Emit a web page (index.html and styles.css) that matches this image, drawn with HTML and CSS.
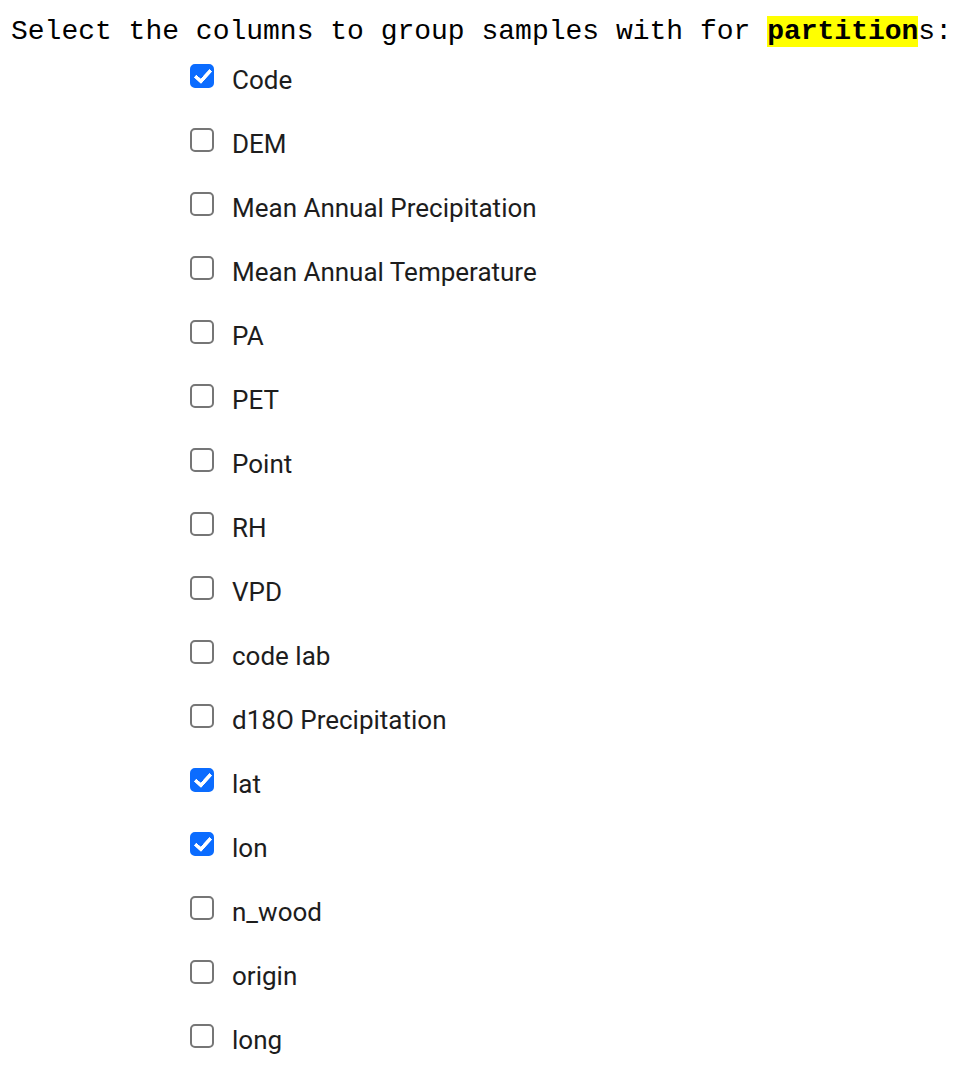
FILE: index.html
```html
<!DOCTYPE html>
<html>
<head>
<meta charset="utf-8">
<link rel="stylesheet" href="styles.css">
</head>
<body>
<p class="prompt">Select the columns to group samples with for <mark class="hl">partition</mark>s:</p>
<ul class="cols">
  <li class="row"><label class="opt"><input type="checkbox" class="cb" checked><span>Code</span></label></li>
  <li class="row"><label class="opt"><input type="checkbox" class="cb"><span>DEM</span></label></li>
  <li class="row"><label class="opt"><input type="checkbox" class="cb"><span>Mean Annual Precipitation</span></label></li>
  <li class="row"><label class="opt"><input type="checkbox" class="cb"><span>Mean Annual Temperature</span></label></li>
  <li class="row"><label class="opt"><input type="checkbox" class="cb"><span>PA</span></label></li>
  <li class="row"><label class="opt"><input type="checkbox" class="cb"><span>PET</span></label></li>
  <li class="row"><label class="opt"><input type="checkbox" class="cb"><span>Point</span></label></li>
  <li class="row"><label class="opt"><input type="checkbox" class="cb"><span>RH</span></label></li>
  <li class="row"><label class="opt"><input type="checkbox" class="cb"><span>VPD</span></label></li>
  <li class="row"><label class="opt"><input type="checkbox" class="cb"><span>code lab</span></label></li>
  <li class="row"><label class="opt"><input type="checkbox" class="cb"><span>d18O Precipitation</span></label></li>
  <li class="row"><label class="opt"><input type="checkbox" class="cb" checked><span>lat</span></label></li>
  <li class="row"><label class="opt"><input type="checkbox" class="cb" checked><span>lon</span></label></li>
  <li class="row"><label class="opt"><input type="checkbox" class="cb"><span>n_wood</span></label></li>
  <li class="row"><label class="opt"><input type="checkbox" class="cb"><span>origin</span></label></li>
  <li class="row"><label class="opt"><input type="checkbox" class="cb"><span>long</span></label></li>
</ul>
</body>
</html>
```

FILE: styles.css
```css
html, body {
  margin: 0;
  padding: 0;
  background: #ffffff;
}
body {
  padding-top: 16px;
}
.prompt {
  margin: 0 0 0 11px;
  font-family: "Liberation Mono", monospace;
  font-size: 28px;
  line-height: 32px;
  color: #000;
  white-space: nowrap;
}
.hl {
  background: #ffff00;
  color: #000;
  font-weight: bold;
}
.cols {
  list-style: none;
  margin: 0;
  padding: 0 0 0 190px;
}
.row {
  height: 64px;
  display: flex;
  align-items: center;
}
.opt {
  display: flex;
  align-items: center;
  gap: 18px;
  font-family: Roboto, "Liberation Sans", sans-serif;
  font-size: 26px;
  color: #1d1d1d;
}
.cb {
  appearance: none;
  -webkit-appearance: none;
  margin: 0;
  width: 24px;
  height: 24px;
  box-sizing: border-box;
  border: 2px solid #767676;
  border-radius: 5px;
  background: #fff;
  position: relative;
  flex: none;
  top: -4px;
}
.cb:checked {
  background: #0b6cff;
  border-color: #0b6cff;
}
.cb:checked::after {
  content: "";
  position: absolute;
  left: 6px;
  top: 0px;
  width: 6px;
  height: 13px;
  border: solid #fff;
  border-width: 0 4px 4px 0;
  border-radius: 1px;
  transform: rotate(42deg);
}
```
